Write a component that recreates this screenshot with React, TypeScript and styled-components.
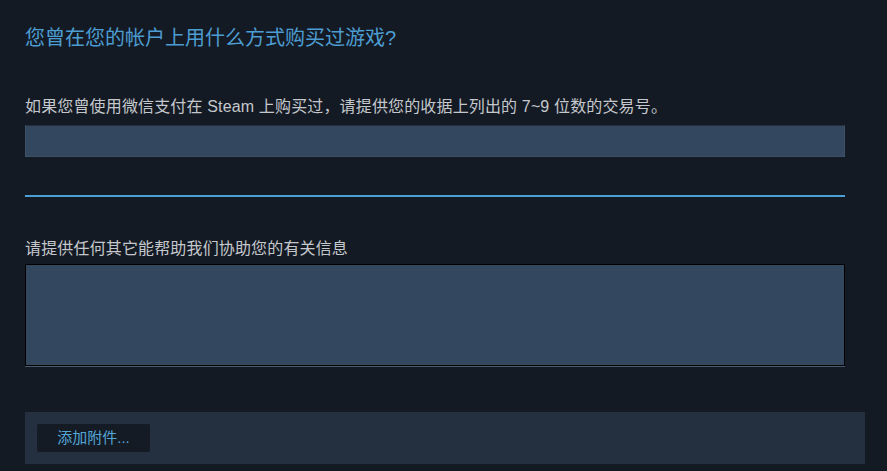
import React from "react";
import styled, { createGlobalStyle } from "styled-components";

const Global = createGlobalStyle`
  html, body {
    margin: 0;
    padding: 0;
    background: #141a24;
  }
  body {
    font-family: "Liberation Sans", "Noto Sans CJK SC", sans-serif;
  }
`;

const Page = styled.div`
  width: 887px;
  height: 471px;
  box-sizing: border-box;
  padding: 26px 0 0 25px;
  background: #141a24;
  display: flex;
  flex-direction: column;
  overflow: hidden;
`;

const Title = styled.h2`
  margin: 0;
  font-size: 20px;
  line-height: 24px;
  font-weight: 400;
  color: #4c9dd1;
`;

const Label = styled.div<{ $top: number }>`
  margin-top: ${(p) => p.$top}px;
  font-size: 16px;
  line-height: 20px;
  letter-spacing: 0.15px;
  color: #c4c8cc;
`;

const TextInput = styled.input`
  margin-top: 8px;
  width: 820px;
  height: 32px;
  box-sizing: border-box;
  background: #33485f;
  border: 1px solid #3c5068;
  border-top-color: #223040;
  outline: none;
  color: #c4c8cc;
  font: inherit;
  padding: 0 8px;
`;

const Divider = styled.div`
  margin-top: 38px;
  width: 820px;
  height: 2px;
  background: #4b9fd6;
`;

const TextArea = styled.textarea`
  margin-top: 5px;
  width: 820px;
  height: 102px;
  box-sizing: border-box;
  background: #33485f;
  border: 1px solid #000;
  box-shadow: 0 1px 0 #485a6e;
  outline: none;
  resize: none;
  color: #c4c8cc;
  font: inherit;
  padding: 6px;
`;

const AttachPanel = styled.div`
  margin-top: 46px;
  width: 840px;
  height: 52px;
  box-sizing: border-box;
  padding: 12px;
  background: #24303f;
  display: flex;
  align-items: center;
`;

const AttachButton = styled.button`
  width: 113px;
  height: 28px;
  border: none;
  border-radius: 2px;
  background: #141b24;
  color: #55a6d8;
  font-family: inherit;
  font-size: 15px;
  line-height: 28px;
  padding: 0;
  cursor: pointer;
`;

export default function App() {
  return (
    <>
      <Global />
      <Page>
        <Title>您曾在您的帐户上用什么方式购买过游戏?</Title>
        <Label $top={47}>
          如果您曾使用微信支付在 Steam 上购买过，请提供您的收据上列出的 7~9 位数的交易号。
        </Label>
        <TextInput type="text" />
        <Divider />
        <Label $top={42}>请提供任何其它能帮助我们协助您的有关信息</Label>
        <TextArea />
        <AttachPanel>
          <AttachButton>添加附件...</AttachButton>
        </AttachPanel>
      </Page>
    </>
  );
}
